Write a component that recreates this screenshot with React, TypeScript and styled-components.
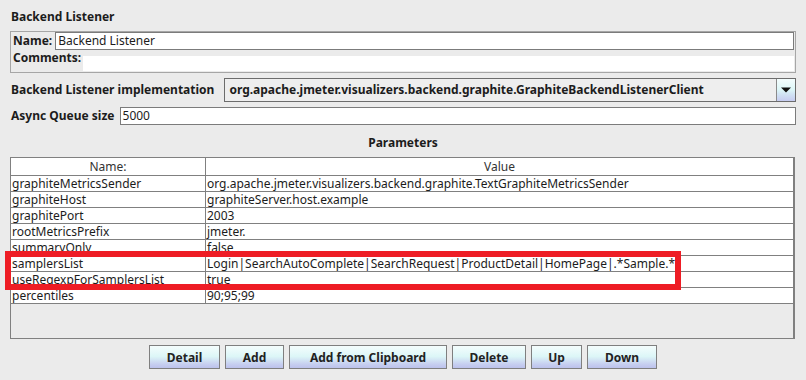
import React from "react";
import styled, { createGlobalStyle } from "styled-components";

const GlobalStyle = createGlobalStyle`
  html, body {
    margin: 0;
    padding: 0;
    background: #ebebeb;
  }
  body {
    font-family: "Noto Sans", "DejaVu Sans", sans-serif;
    font-size: 12px;
    color: #1c1c1c;
  }
`;

const Page = styled.div`
  position: relative;
  width: 806px;
  height: 380px;
  box-sizing: border-box;
  padding: 9px 10px 0 10px;
  display: flex;
  flex-direction: column;
`;

const PanelTitle = styled.div`
  font-weight: bold;
  line-height: 16px;
  padding-left: 1px;
`;

const NamePanel = styled.div`
  margin-top: 6px;
  border: 1px solid #a6a6a6;
  padding: 0 1px;
  display: flex;
  flex-direction: column;
`;

const NameRow = styled.div`
  display: flex;
  align-items: center;
  height: 18px;
`;

const CommentsRow = styled.div`
  display: flex;
  align-items: flex-start;
  height: 22px;
`;

const Label = styled.span<{ $gap?: number }>`
  font-weight: bold;
  line-height: 16px;
  white-space: nowrap;
  padding-left: 1px;
  margin-right: ${(p) => p.$gap ?? 0}px;
`;

const TextField = styled.div`
  flex: 1;
  height: 18px;
  box-sizing: border-box;
  border: 1px solid #7b7b7b;
  background: #fff;
  padding: 0 2px;
  line-height: 16px;
  white-space: nowrap;
`;

const CommentsBox = styled.div`
  flex: 1;
  height: 15px;
  margin-top: 6px;
  background: #fff;
`;

const FieldRow = styled.div<{ $height: number }>`
  display: flex;
  align-items: center;
  margin-top: 5px;
  height: ${(p) => p.$height}px;
`;

const Combo = styled.div`
  flex: 1;
  height: 24px;
  box-sizing: border-box;
  border: 1px solid #6c6c6c;
  background: #eeeeee;
  display: flex;
`;

const ComboText = styled.div`
  flex: 1;
  padding-left: 4px;
  font-weight: bold;
  line-height: 22px;
  white-space: nowrap;
  overflow: hidden;
`;

const ArrowButton = styled.div`
  width: 18px;
  border-left: 1px solid #8a8a8a;
  background: linear-gradient(#f4fdfd 0%, #dcf6f7 50%, #d2e4f4 68%, #c6ccf0 100%);
  display: flex;
  align-items: center;
  justify-content: center;
`;

const SectionTitle = styled.div`
  margin-top: 10px;
  text-align: center;
  font-weight: bold;
  line-height: 16px;
`;

const Table = styled.div`
  margin-top: 6px;
  margin-right: 1px;
  height: 182px;
  box-sizing: border-box;
  border: 1px solid #808080;
  border-right-width: 2px;
  background: #ebebeb;
`;

const GridRow = styled.div<{ $header?: boolean }>`
  display: grid;
  grid-template-columns: 195px 1fr;
  height: ${(p) => (p.$header ? 18 : 16)}px;
  box-sizing: border-box;
  border-bottom: 1px solid #808080;
  background: #fff;
`;

const Cell = styled.div<{ $header?: boolean }>`
  padding-left: ${(p) => (p.$header ? 0 : 1)}px;
  text-align: ${(p) => (p.$header ? "center" : "left")};
  line-height: ${(p) => (p.$header ? 17 : 15)}px;
  color: ${(p) => (p.$header ? "#333" : "#1c1c1c")};
  white-space: nowrap;
  overflow: hidden;
  &:first-child {
    border-right: 1px solid #808080;
  }
`;

const ButtonBar = styled.div`
  margin-top: 6px;
  display: flex;
  justify-content: center;
  gap: 5px;
`;

const ActionButton = styled.button<{ $width: number }>`
  width: ${(p) => p.$width}px;
  height: 24px;
  padding: 0;
  border: 1px solid #7f7f7f;
  font-family: inherit;
  font-size: 12px;
  font-weight: bold;
  color: #222;
  background: linear-gradient(#f4fdfd 0%, #dcf6f7 48%, #d3e6f4 62%, #c7cff0 82%, #bcc2ec 100%);
  cursor: default;
`;

const Highlight = styled.div`
  position: absolute;
  left: 5px;
  top: 251px;
  width: 676px;
  height: 39px;
  box-sizing: border-box;
  border: 6px solid #ee1d25;
  pointer-events: none;
`;

const params: [string, string][] = [
  ["graphiteMetricsSender", "org.apache.jmeter.visualizers.backend.graphite.TextGraphiteMetricsSender"],
  ["graphiteHost", "graphiteServer.host.example"],
  ["graphitePort", "2003"],
  ["rootMetricsPrefix", "jmeter."],
  ["summaryOnly", "false"],
  ["samplersList", "Login|SearchAutoComplete|SearchRequest|ProductDetail|HomePage|.*Sample.*"],
  ["useRegexpForSamplersList", "true"],
  ["percentiles", "90;95;99"],
];

const buttons: [string, number][] = [
  ["Detail", 71],
  ["Add", 59],
  ["Add from Clipboard", 158],
  ["Delete", 74],
  ["Up", 51],
  ["Down", 70],
];

const App: React.FC = () => {
  return (
    <>
      <GlobalStyle />
      <Page>
        <PanelTitle>Backend Listener</PanelTitle>
        <NamePanel>
          <NameRow>
            <Label $gap={3}>Name:</Label>
            <TextField>Backend Listener</TextField>
          </NameRow>
          <CommentsRow>
            <Label $gap={2}>Comments:</Label>
            <CommentsBox />
          </CommentsRow>
        </NamePanel>
        <FieldRow $height={24}>
          <Label $gap={10}>Backend Listener implementation</Label>
          <Combo>
            <ComboText>org.apache.jmeter.visualizers.backend.graphite.GraphiteBackendListenerClient</ComboText>
            <ArrowButton>
              <svg width="10" height="6" viewBox="0 0 10 6">
                <path d="M0 0.5h10L5 5.5z" fill="#111" />
              </svg>
            </ArrowButton>
          </Combo>
        </FieldRow>
        <FieldRow $height={18}>
          <Label $gap={5}>Async Queue size</Label>
          <TextField>5000</TextField>
        </FieldRow>
        <SectionTitle>Parameters</SectionTitle>
        <Table>
          <GridRow $header>
            <Cell $header>Name:</Cell>
            <Cell $header>Value</Cell>
          </GridRow>
          {params.map(([name, value]) => (
            <GridRow key={name}>
              <Cell>{name}</Cell>
              <Cell>{value}</Cell>
            </GridRow>
          ))}
        </Table>
        <ButtonBar>
          {buttons.map(([label, width]) => (
            <ActionButton key={label} $width={width}>
              {label}
            </ActionButton>
          ))}
        </ButtonBar>
        <Highlight />
      </Page>
    </>
  );
};

export default App;
